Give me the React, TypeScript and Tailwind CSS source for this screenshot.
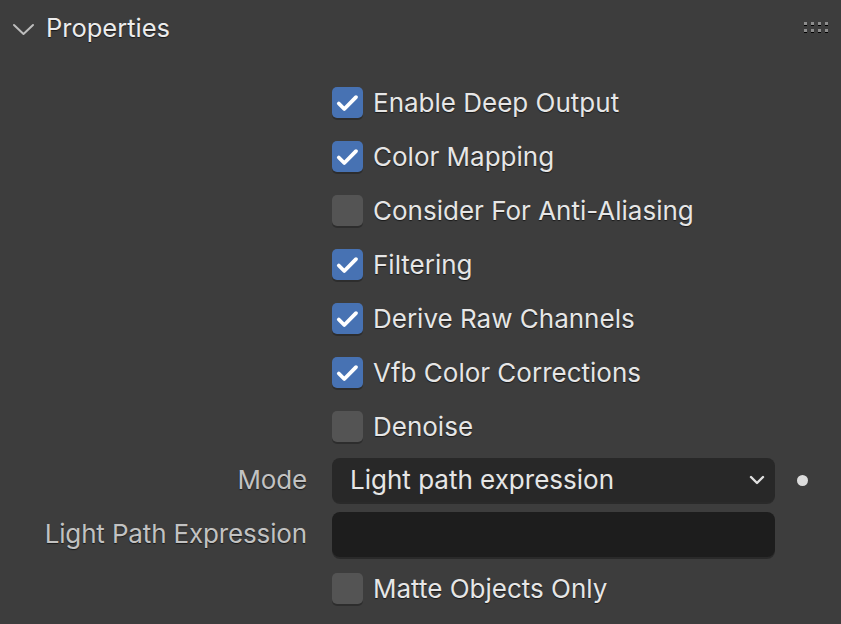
import { useState } from "react";

const font = { fontFamily: "Inter, 'Noto Sans', sans-serif" };

type Item = { key: string; label: string; checked: boolean };

const initialItems: Item[] = [
  { key: "deep", label: "Enable Deep Output", checked: true },
  { key: "color", label: "Color Mapping", checked: true },
  { key: "aa", label: "Consider For Anti-Aliasing", checked: false },
  { key: "filter", label: "Filtering", checked: true },
  { key: "raw", label: "Derive Raw Channels", checked: true },
  { key: "vfb", label: "Vfb Color Corrections", checked: true },
  { key: "denoise", label: "Denoise", checked: false },
];

function Checkbox({ checked, label, onChange }: { checked: boolean; label: string; onChange: () => void }) {
  return (
    <button onClick={onChange} className="flex h-[54px] items-center gap-[10px] text-left">
      <span
        className={`flex h-[31px] w-[31px] shrink-0 items-center justify-center rounded-[5px] shadow-[0_2px_0_rgba(0,0,0,0.25)] ${
          checked ? "bg-[#4772b3]" : "bg-[#545454]"
        }`}
      >
        {checked && (
          <svg width="31" height="31" viewBox="0 0 31 31" fill="none">
            <path d="M6.8 16.5 L12.3 22 L24 10.2" stroke="#ffffff" strokeWidth="3.8" strokeLinecap="round" strokeLinejoin="round" />
          </svg>
        )}
      </span>
      <span className="mt-[1px] text-[26px] leading-[30px] text-[#e6e6e6] [text-shadow:0_1px_1px_rgba(0,0,0,0.6)]">{label}</span>
    </button>
  );
}

function Label({ children }: { children: string }) {
  return (
    <div className="w-[307px] shrink-0 text-right text-[26px] leading-[30px] tracking-[-0.15px] text-[#c2c2c2] [text-shadow:0_1px_1px_rgba(0,0,0,0.6)]">
      {children}
    </div>
  );
}

export default function App() {
  const [items, setItems] = useState(initialItems);
  const [matte, setMatte] = useState(false);
  const [open, setOpen] = useState(true);

  function toggle(key: string) {
    setItems((current) => current.map((item) => (item.key === key ? { ...item, checked: !item.checked } : item)));
  }

  return (
    <div className="h-[624px] w-[841px] overflow-hidden bg-[#3d3d3d]" style={font}>
      <div className="flex h-[56px] items-center pl-[12px] pr-[12px]">
        <button onClick={() => setOpen(!open)} className="flex items-center">
          <svg width="24" height="24" viewBox="0 0 24 24" fill="none" className="mt-[2px]">
            <path d="M2 8 L11.5 17 L21 8" stroke="#bdbdbd" strokeWidth="2" strokeLinecap="round" strokeLinejoin="round" />
          </svg>
          <span className="ml-[10px] text-[25.5px] text-[#ececec] [text-shadow:0_1px_1px_rgba(0,0,0,0.6)]">Properties</span>
        </button>
        <div className="ml-auto mr-[1px] mt-[-2px] grid grid-cols-4 gap-x-[4px] gap-y-[4px]">
          {Array.from({ length: 8 }).map((_, i) => (
            <span key={i} className="h-[3px] w-[3px] bg-[#8c8c8c] shadow-[0_1px_0_#000]" />
          ))}
        </div>
      </div>

      {open && (
        <div className="pt-[19px]">
          <div className="flex flex-col pl-[332px]">
            {items.map((item) => (
              <Checkbox key={item.key} checked={item.checked} label={item.label} onChange={() => toggle(item.key)} />
            ))}
          </div>

          <div className="flex h-[54px] items-center">
            <Label>Mode</Label>
            <div className="ml-[25px] flex h-[44px] w-[443px] items-center rounded-[8px] bg-[#282828] pl-[18px] pr-[10px] shadow-[0_2px_0_rgba(0,0,0,0.3)]">
              <span className="flex-1 text-[26px] leading-[30px] text-[#e6e6e6]">Light path expression</span>
              <svg width="16" height="12" viewBox="0 0 16 12" fill="none">
                <path d="M2 3 L8 9 L14 3" stroke="#e0e0e0" strokeWidth="2.4" strokeLinecap="round" strokeLinejoin="round" />
              </svg>
            </div>
            <span className="ml-[22px] h-[11px] w-[11px] rounded-full bg-[#dcdcdc]" />
          </div>

          <div className="flex h-[54px] items-center">
            <Label>Light Path Expression</Label>
            <input
              className="ml-[25px] h-[45px] w-[443px] rounded-[8px] bg-[#1d1d1d] px-[18px] text-[26px] text-[#e6e6e6] shadow-[0_2px_0_rgba(0,0,0,0.3)] outline-none"
              defaultValue=""
            />
          </div>

          <div className="pl-[332px]">
            <Checkbox checked={matte} label="Matte Objects Only" onChange={() => setMatte(!matte)} />
          </div>
        </div>
      )}
    </div>
  );
}
